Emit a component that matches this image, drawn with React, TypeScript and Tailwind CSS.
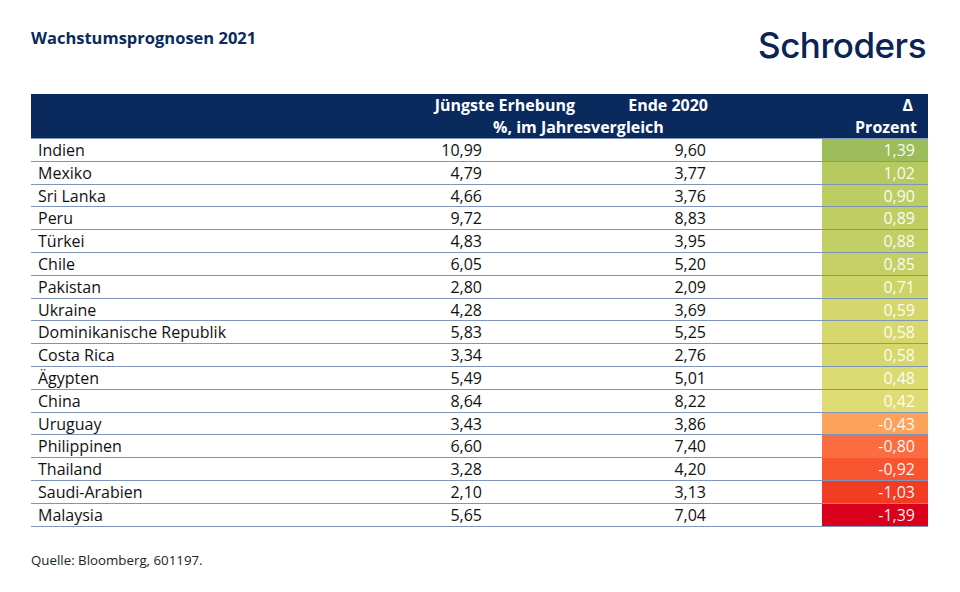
import React from 'react';

interface Row {
  land: string;
  aktuell: string;
  ende: string;
  delta: string;
  farbe: string;
}

const rows: Row[] = [
  { land: 'Indien', aktuell: '10,99', ende: '9,60', delta: '1,39', farbe: '#9cbd5a' },
  { land: 'Mexiko', aktuell: '4,79', ende: '3,77', delta: '1,02', farbe: '#b6ca5f' },
  { land: 'Sri Lanka', aktuell: '4,66', ende: '3,76', delta: '0,90', farbe: '#bccd62' },
  { land: 'Peru', aktuell: '9,72', ende: '8,83', delta: '0,89', farbe: '#bfce63' },
  { land: 'Türkei', aktuell: '4,83', ende: '3,95', delta: '0,88', farbe: '#c1cf64' },
  { land: 'Chile', aktuell: '6,05', ende: '5,20', delta: '0,85', farbe: '#c4d065' },
  { land: 'Pakistan', aktuell: '2,80', ende: '2,09', delta: '0,71', farbe: '#ccd468' },
  { land: 'Ukraine', aktuell: '4,28', ende: '3,69', delta: '0,59', farbe: '#d4d76c' },
  { land: 'Dominikanische Republik', aktuell: '5,83', ende: '5,25', delta: '0,58', farbe: '#d6d86d' },
  { land: 'Costa Rica', aktuell: '3,34', ende: '2,76', delta: '0,58', farbe: '#d6d86d' },
  { land: 'Ägypten', aktuell: '5,49', ende: '5,01', delta: '0,48', farbe: '#dadb70' },
  { land: 'China', aktuell: '8,64', ende: '8,22', delta: '0,42', farbe: '#dedc73' },
  { land: 'Uruguay', aktuell: '3,43', ende: '3,86', delta: '-0,43', farbe: '#fca25b' },
  { land: 'Philippinen', aktuell: '6,60', ende: '7,40', delta: '-0,80', farbe: '#fb6d40' },
  { land: 'Thailand', aktuell: '3,28', ende: '4,20', delta: '-0,92', farbe: '#f95430' },
  { land: 'Saudi-Arabien', aktuell: '2,10', ende: '3,13', delta: '-1,03', farbe: '#f23c23' },
  { land: 'Malaysia', aktuell: '5,65', ende: '7,04', delta: '-1,39', farbe: '#d9001b' },
];

export default function App() {
  return (
    <div className="w-[960px] h-[592px] bg-white pl-[31px] pr-[32px] font-['Open_Sans',sans-serif] text-[#111]">
      {/* Kopfzeile */}
      <div className="flex items-start justify-between h-[94px]">
        <h1 className="mt-[26px] text-[16.5px] font-bold leading-[24px] text-[#0d2a5c]">
          Wachstumsprognosen 2021
        </h1>
        <div className="mt-[23px] mr-[2px] font-['Inter',sans-serif] text-[35px] font-medium leading-[44px] tracking-[-0.5px] text-[#0c2356]">
          Schroders
        </div>
      </div>

      {/* Tabelle */}
      <div className="w-[897px]">
        <div className="h-[44px] bg-[#0a2a5e] text-[16px] font-bold leading-[22px] text-white">
          <div className="flex">
            <div className="w-[544px] text-right">Jüngste Erhebung</div>
            <div className="w-[133px] text-right">Ende 2020</div>
            <div className="flex-1 pr-[15px] text-right">Δ</div>
          </div>
          <div className="flex">
            <div className="flex-1 pl-[462px]">%, im Jahresvergleich</div>
            <div className="pr-[11px]">Prozent</div>
          </div>
        </div>
        <div className="border-t border-[#7f95b9]">
          {rows.map((r) => (
            <div
              key={r.land}
              className="grid h-[22.8px] grid-cols-[369px_86px_224px_112px_106px] border-b border-[#7f95b9] text-[16px] leading-[20.8px]"
            >
              <div className="pt-[1px] pl-[7px]">{r.land}</div>
              <div className="pt-[1px] pr-[4px] text-right">{r.aktuell}</div>
              <div className="pt-[1px] pr-[4px] text-right">{r.ende}</div>
              <div />
              <div className="pt-[1px] pr-[13px] text-right text-white/95" style={{ backgroundColor: r.farbe }}>
                {r.delta}
              </div>
            </div>
          ))}
        </div>
      </div>

      <p className="mt-[24px] text-[13.3px] leading-[18px] text-[#222]">Quelle: Bloomberg, 601197.</p>
    </div>
  );
}
